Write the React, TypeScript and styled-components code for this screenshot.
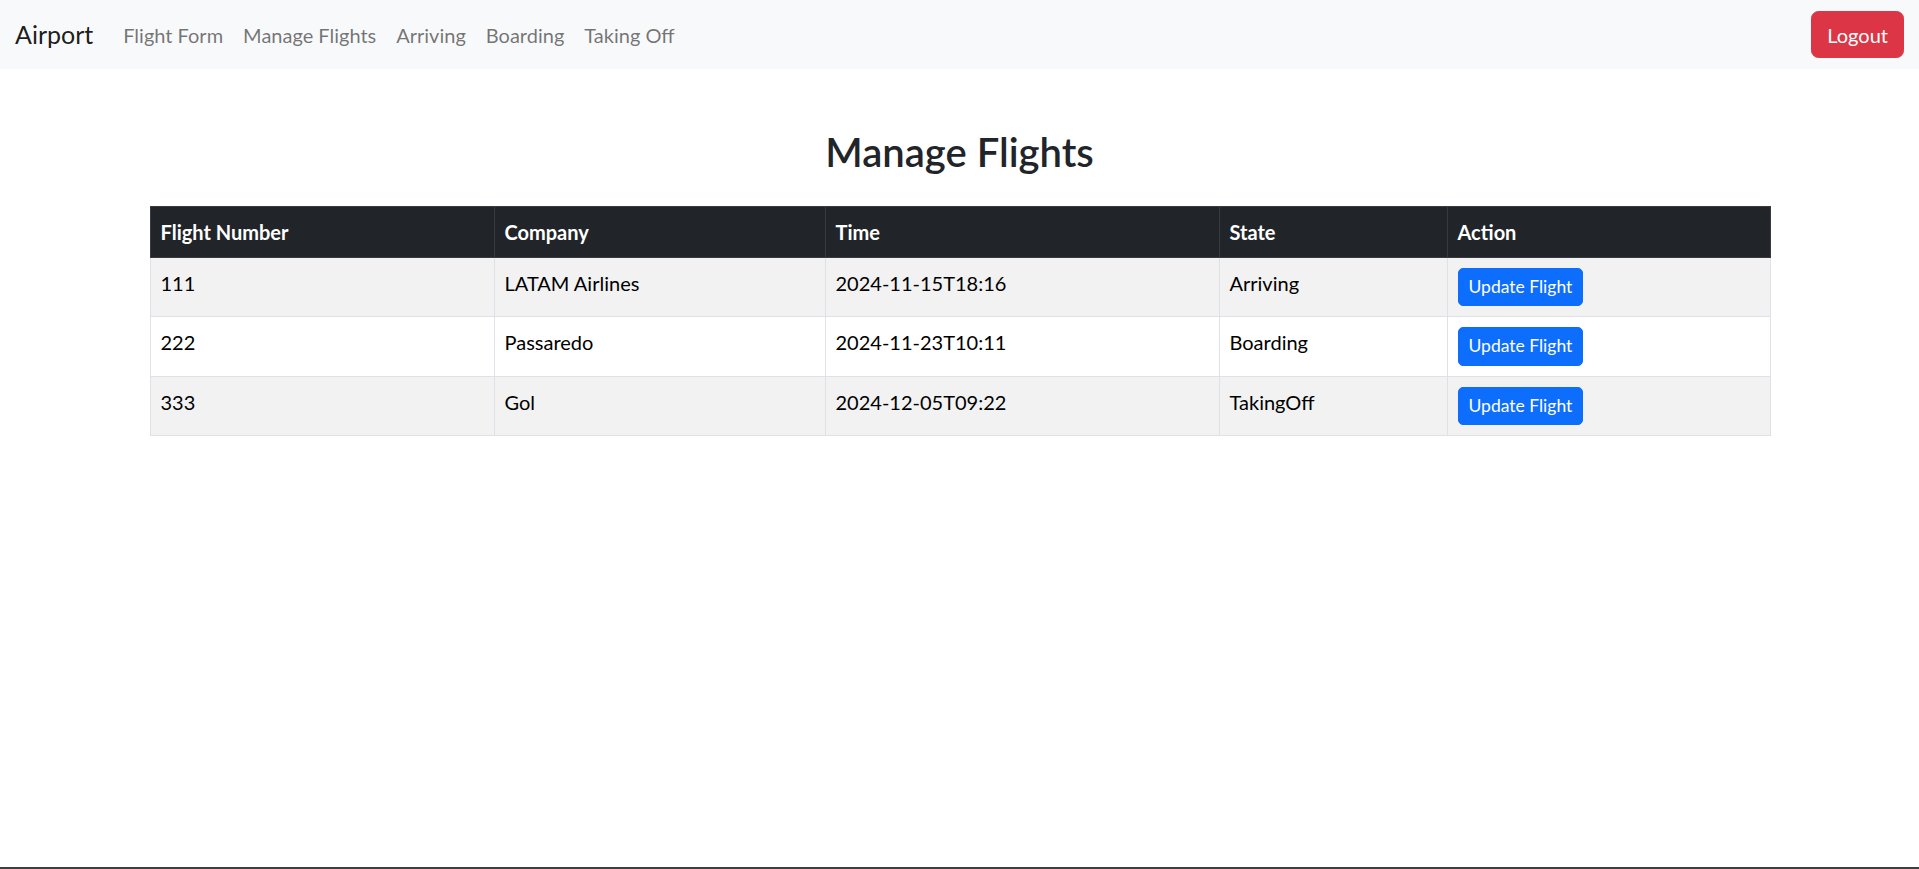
import styled, { createGlobalStyle } from "styled-components"

const GlobalStyle = createGlobalStyle`
  * { box-sizing: border-box; }
  body {
    margin: 0;
    font-family: "Segoe UI", Lato, "Noto Sans", sans-serif;
    font-size: 20px;
    line-height: 1.5;
    color: #212529;
    background: #fff;
  }
`

const Page = styled.div`
  min-height: 869px;
  border-bottom: 2px solid #3f3f3f;
`

const NavBar = styled.nav`
  height: 69px;
  background: #f8f9fa;
  display: flex;
  align-items: center;
  padding: 0 15px;
`

const Brand = styled.a`
  font-size: 25px;
  color: rgba(0, 0, 0, 0.9);
  margin-right: 20px;
  text-decoration: none;
  line-height: 1.5;
`

const NavList = styled.ul`
  display: flex;
  list-style: none;
  margin: 0;
  padding: 0;
  flex: 1;
`

const NavLink = styled.a`
  display: block;
  padding: 10px 10px;
  color: rgba(0, 0, 0, 0.55);
  text-decoration: none;
  font-size: 20px;
`

const Btn = styled.button<{ $variant: "danger" | "primary"; $small?: boolean }>`
  font-family: inherit;
  color: #fff;
  background: ${(p) => (p.$variant === "danger" ? "#dc3545" : "#0d6efd")};
  border: 1.25px solid ${(p) => (p.$variant === "danger" ? "#dc3545" : "#0d6efd")};
  border-radius: ${(p) => (p.$small ? "5px" : "7.5px")};
  padding: ${(p) => (p.$small ? "5px 10px" : "7.5px 15px")};
  font-size: ${(p) => (p.$small ? "17.5px" : "20px")};
  line-height: 1.5;
  cursor: pointer;
`

const Container = styled.main`
  width: 1650px;
  margin: 0 auto;
  padding: 0 15px;
`

const Title = styled.h2`
  margin: 59px 0 30px;
  text-align: center;
  font-size: 40px;
  font-weight: 600;
  line-height: 1.2;
`

const Table = styled.table`
  width: 1620px;
  border-collapse: collapse;
  border: 1px solid #dee2e6;
  table-layout: fixed;
`

const Th = styled.th`
  background: #212529;
  color: #fff;
  font-weight: 700;
  text-align: left;
  padding: 10px;
  border: 1px solid #373b3e;
  vertical-align: top;
`

const Tr = styled.tr<{ $striped: boolean }>`
  background: ${(p) => (p.$striped ? "#f2f2f2" : "#fff")};
`

const Td = styled.td`
  padding: 10px;
  border: 1px solid #dee2e6;
  color: #000;
  vertical-align: top;
`

const columns = [
  { label: "Flight Number", width: 344 },
  { label: "Company", width: 331 },
  { label: "Time", width: 394 },
  { label: "State", width: 228 },
  { label: "Action", width: 323 },
]

const flights = [
  { number: "111", company: "LATAM Airlines", time: "2024-11-15T18:16", state: "Arriving" },
  { number: "222", company: "Passaredo", time: "2024-11-23T10:11", state: "Boarding" },
  { number: "333", company: "Gol", time: "2024-12-05T09:22", state: "TakingOff" },
]

const links = ["Flight Form", "Manage Flights", "Arriving", "Boarding", "Taking Off"]

export default function App() {
  return (
    <Page>
      <GlobalStyle />
      <NavBar>
        <Brand href="#">Airport</Brand>
        <NavList>
          {links.map((l) => (
            <li key={l}>
              <NavLink href="#">{l}</NavLink>
            </li>
          ))}
        </NavList>
        <Btn $variant="danger">Logout</Btn>
      </NavBar>
      <Container>
        <Title>Manage Flights</Title>
        <Table>
          <colgroup>
            {columns.map((c) => (
              <col key={c.label} style={{ width: c.width }} />
            ))}
          </colgroup>
          <thead>
            <tr>
              {columns.map((c) => (
                <Th key={c.label}>{c.label}</Th>
              ))}
            </tr>
          </thead>
          <tbody>
            {flights.map((f, i) => (
              <Tr key={f.number} $striped={i % 2 === 0}>
                <Td>{f.number}</Td>
                <Td>{f.company}</Td>
                <Td>{f.time}</Td>
                <Td>{f.state}</Td>
                <Td>
                  <Btn $variant="primary" $small>
                    Update Flight
                  </Btn>
                </Td>
              </Tr>
            ))}
          </tbody>
        </Table>
      </Container>
    </Page>
  )
}
